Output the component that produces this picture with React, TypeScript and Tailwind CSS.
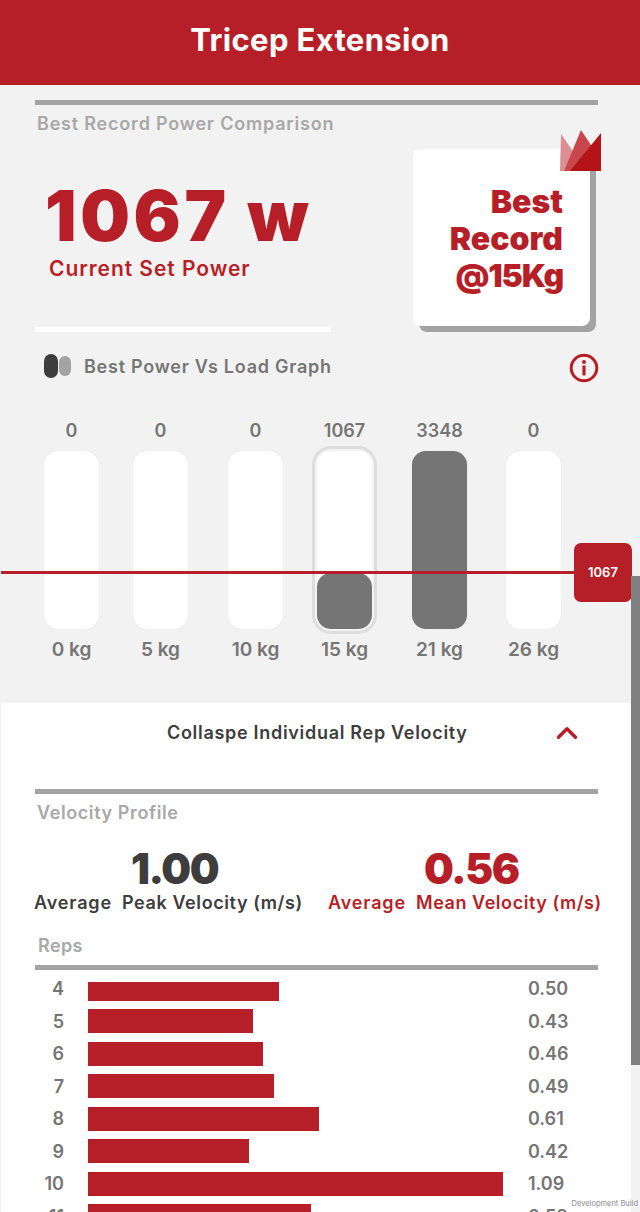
import { ChevronUp } from "lucide-react";

const loads = [
  { value: "0", label: "0 kg", fill: 0, gap: "ml-[44px]" },
  { value: "0", label: "5 kg", fill: 0, gap: "ml-[34px]" },
  { value: "0", label: "10 kg", fill: 0, gap: "ml-[40px]" },
  { value: "1067", label: "15 kg", fill: 56, gap: "ml-[34px]", active: true },
  { value: "3348", label: "21 kg", fill: 178, gap: "ml-[40px]" },
  { value: "0", label: "26 kg", fill: 0, gap: "ml-[39px]" },
];

const reps = [
  { rep: 4, width: 191, height: 18.5, value: "0.50" },
  { rep: 5, width: 165, height: 24, value: "0.43" },
  { rep: 6, width: 175, height: 24, value: "0.46" },
  { rep: 7, width: 186, height: 24, value: "0.49" },
  { rep: 8, width: 231, height: 24, value: "0.61" },
  { rep: 9, width: 161, height: 24, value: "0.42" },
  { rep: 10, width: 415, height: 24, value: "1.09" },
  { rep: 11, width: 223, height: 24, value: "0.58" },
];

function Crown() {
  return (
    <svg viewBox="0 0 41 41" className="absolute left-[560px] top-[130px] w-[41px] h-[41px]">
      <polygon points="0,41 1,4 19,30 12,41" fill="#dc8f92" />
      <polygon points="4,41 21,0 33,18 33,41" fill="#c7474c" />
      <polygon points="10,41 41,3 41,41" fill="#b51416" />
    </svg>
  );
}

function Bar({ value, label, fill, gap, active }: (typeof loads)[number] & { active?: boolean }) {
  return (
    <div className={`${gap} w-[55px] flex flex-col items-center shrink-0`}>
      <div className="h-[24px] leading-[24px] text-[18px] font-semibold text-[#757575] whitespace-nowrap">{value}</div>
      <div
        className={
          active
            ? "mt-[8px] relative h-[178px] w-[55px] rounded-[14px] bg-white shadow-[0_0_0_2px_#f4f4f4,0_0_0_5px_#dddddd]"
            : "mt-[8px] relative h-[178px] w-[55px] rounded-[14px] bg-white shadow-[0_0_1px_#d0d0d0]"
        }
      >
        {fill > 0 && <div className="absolute inset-x-0 bottom-0 rounded-[14px] bg-[#757575]" style={{ height: fill }} />}
      </div>
      <div className="mt-[9px] h-[24px] leading-[24px] text-[19px] font-semibold text-[#757575] whitespace-nowrap">{label}</div>
    </div>
  );
}

export default function App() {
  return (
    <div className="relative w-[640px] h-[1212px] overflow-hidden bg-[#f2f2f2] font-['Inter',sans-serif]">
      <header className="h-[85px] bg-[#b71f28] flex items-center justify-center">
        <h1 className="text-white text-[31px] font-bold tracking-[0.35px] -mt-[4px]">Tricep Extension</h1>
      </header>

      <section className="h-[618px] pt-[15px]">
        <div className="mx-[35px] w-[563px] h-[5px] bg-[#a3a3a3]" />
        <div className="mt-[7px] ml-[37px] h-[24px] leading-[24px] text-[18px] font-semibold text-[#a8a8a8] tracking-[0.8px]">
          Best Record Power Comparison
        </div>

        <div className="flex mt-[13px]">
          <div className="w-[413px] shrink-0">
            <div className="ml-[45px] mt-[26px] h-[82px] leading-[82px] text-[70px] font-black text-[#b71f28] tracking-[3.6px] whitespace-nowrap">
              1067 w
            </div>
            <div className="ml-[49px] -mt-[1px] h-[26px] leading-[26px] text-[21px] font-semibold text-[#b71f28] tracking-[0.95px]">
              Current Set Power
            </div>
            <div className="ml-[35px] mt-[45px] w-[296px] h-[5px] bg-white" />
          </div>
          <div className="w-[177px] h-[177px] bg-white rounded-[8px] shadow-[6px_6px_0_#a3a3a3] flex flex-col justify-center items-end pr-[27px] pt-[1px]">
            <div className="text-right text-[32px] leading-[37px] font-black text-[#b71f28]">
              Best
              <br />
              Record
              <br />
              <span className="tracking-[-1.2px]">@15Kg</span>
            </div>
          </div>
        </div>
        <Crown />

        <div className="flex items-center mt-[20px] ml-[44px] mr-[41px] h-[28px]">
          <span className="w-[14px] h-[24px] rounded-full bg-[#3d3d3d]" />
          <span className="ml-[1px] w-[12px] h-[20px] rounded-full bg-[#a3a3a3]" />
          <span className="ml-[13px] text-[18px] font-semibold text-[#757575] tracking-[0.75px]">Best Power Vs Load Graph</span>
          <svg viewBox="0 0 30 30" className="ml-auto w-[30px] h-[30px] mt-[3px]">
            <circle cx="15" cy="15" r="12.8" fill="none" stroke="#b71f28" strokeWidth="3" />
            <circle cx="15" cy="9" r="2" fill="#b71f28" />
            <rect x="13.4" y="12.5" width="3.2" height="10" rx="0.8" fill="#b71f28" />
          </svg>
        </div>

        <div className="flex mt-[39px]">
          {loads.map((l) => (
            <Bar key={l.label} {...l} />
          ))}
        </div>
      </section>

      <section className="ml-px mr-[9px] bg-white h-[509px] overflow-hidden">
        <div className="relative h-[58px] flex items-center">
          <span className="ml-[166px] text-[18px] font-semibold text-[#3d3d3d] tracking-[0.7px]">Collaspe Individual Rep Velocity</span>
          <ChevronUp className="absolute left-[549px] top-[13px] text-[#b71f28]" size={34} strokeWidth={2.4} />
        </div>
        <div className="ml-[34px] mt-[28px] w-[563px] h-[5px] bg-[#a3a3a3]" />
        <div className="ml-[36px] mt-[7px] h-[24px] leading-[24px] text-[18px] font-semibold text-[#a8a8a8] tracking-[0.6px]">Velocity Profile</div>

        <div className="relative h-[97px] mt-[12px]">
          <div className="absolute left-[130px] top-[7px] h-[50px] leading-[50px] text-[42px] font-black text-[#3d3d3d] tracking-[-1.5px] whitespace-nowrap">1.00</div>
          <div className="absolute left-[423px] top-[7px] h-[50px] leading-[50px] text-[42px] font-black text-[#b71f28] tracking-[-1.5px] whitespace-nowrap">0.56</div>
          <div className="absolute left-[33px] top-[54px] text-[18px] leading-[24px] font-semibold text-[#3d3d3d] tracking-[0.85px] whitespace-nowrap">Average</div>
          <div className="absolute left-[121px] top-[54px] text-[18px] leading-[24px] font-semibold text-[#3d3d3d] tracking-[0.6px] whitespace-nowrap">Peak Velocity (m/s)</div>
          <div className="absolute left-[327px] top-[54px] text-[18px] leading-[24px] font-semibold text-[#b71f28] tracking-[0.85px] whitespace-nowrap">Average</div>
          <div className="absolute left-[415px] top-[54px] text-[18px] leading-[24px] font-semibold text-[#b71f28] tracking-[0.55px] whitespace-nowrap">Mean Velocity (m/s)</div>
        </div>

        <div className="ml-[37px] h-[24px] leading-[24px] text-[18px] font-semibold text-[#a8a8a8] tracking-[0.4px]">Reps</div>
        <div className="ml-[34px] mt-[7px] w-[563px] h-[5px] bg-[#a3a3a3]" />

        <div className="mt-[6.5px] flex flex-col gap-[8.5px]">
          {reps.map((r) => (
            <div key={r.rep} className="flex items-center h-[24px]">
              <div className="w-[63px] text-right text-[18px] font-semibold text-[#757575]">{r.rep}</div>
              <div className="ml-[24px] w-[440px] h-[24px] flex items-end">
                <div className="bg-[#b71f28]" style={{ width: r.width, height: r.height }} />
              </div>
              <div className="text-[18px] font-semibold text-[#757575]">{r.value}</div>
            </div>
          ))}
        </div>
      </section>

      {/* rival line and tag over the chart */}
      <div className="absolute left-px top-[571px] w-[574px] h-[3px] bg-[#b71f28]" />
      <div className="absolute left-[574px] top-[543px] w-[58px] h-[59px] rounded-[7px] bg-[#b71f28] flex items-center justify-center text-white text-[13px] font-semibold">
        1067
      </div>

      <div className="absolute left-[631px] top-[576px] w-[9px] h-[489px] bg-[#808080]" />
      <div className="absolute right-[2px] top-[1199px] text-[7.5px] leading-[10px] text-[#8a8a8a] [text-shadow:0_0_1px_#ffffff]">Development Build</div>
    </div>
  );
}
